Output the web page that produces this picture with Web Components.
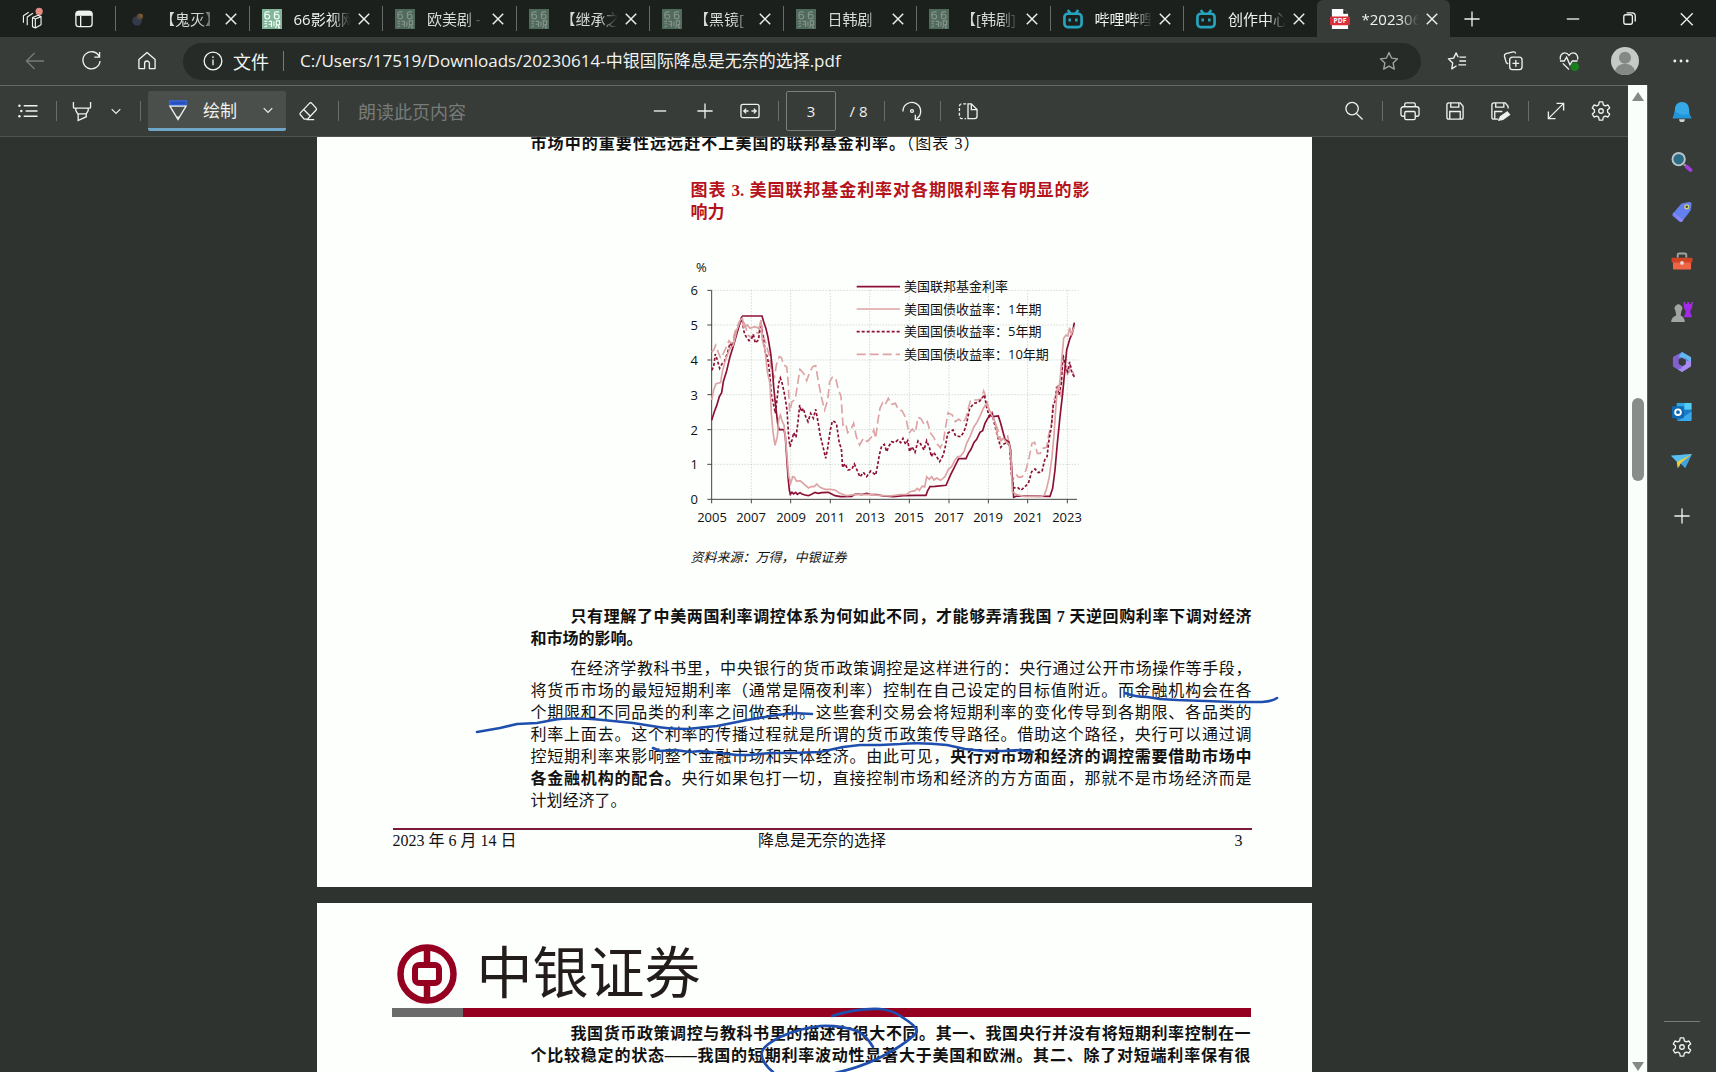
<!DOCTYPE html>
<html lang="zh-CN">
<head>
<meta charset="utf-8">
<title>20230614-中银国际降息是无奈的选择.pdf</title>
<style>
html,body{margin:0;height:100%;background:#2f3330}
body{overflow:hidden;font-family:"Segoe UI","Open Sans","Noto Sans CJK SC",sans-serif}
</style>
</head>
<body>
<browser-app></browser-app>
<script>
const ICONS = {
  workspaces:'<path d="M1.500 14.500V7L7 3.500M5.500 17V8.500L11.500 4.500M11 9l6-2.500 3 1.500v8.500L14 20l-3-1.500zM11 9l3 1.500 6-2.500M14 10.500V20" stroke-width="1.200" stroke-linejoin="round"/><circle cx="18" cy="2.500" r="3.800" fill="#e58a83" stroke="none"/>',
  vtabs:'<rect x="2" y="2.500" width="17" height="16" rx="3"/><path d="M2.500 6.500V5a2.500 2.500 0 0 1 2.500-2.500h11A2.500 2.500 0 0 1 18.500 5v1.500z" fill="currentColor"/><path d="M7 7v11.500"/>',
  close:'<path d="M5 5l11 11M16 5L5 16" stroke-width="1.500"/>',
  plus:'<path d="M10.500 2.500v16M2.500 10.500h16"/>',
  minus:'<path d="M4 10.500h13"/>',
  restore:'<rect x="4" y="6" width="9" height="10" rx="2"/><path d="M7 4h5.500a3.500 3.500 0 0 1 3.500 3.500V13"/>',
  x:'<path d="M4 4.500l12.500 12.500M16.500 4.500L4 17"/>',
  back:'<path d="M20 10.500H1.500M10 2L1.500 10.500 10 19"/>',
  refresh:'<path d="M19 5.500A9 9 0 1 0 20 10.500M19.500 1v5.500H14"/>',
  home:'<path d="M2 9l8.500-7.500L19 9v9.500h-6V13a2.500 2.500 0 0 0-5 0v5.500H2z" stroke-linejoin="round"/>',
  info:'<circle cx="10.500" cy="10.500" r="9.300"/><path d="M10.500 9v6M10.500 5.500v1.800"/>',
  star:'<path d="M10.500 1.500l2.700 5.900 6.300.8-4.700 4.400 1.300 6.400-5.600-3.200L4.900 19l1.300-6.400L1.500 8.200l6.300-.8z" stroke-linejoin="round"/>',
  favorites:'<path d="M10 15.500L5 18.800l1-6.300L1.500 8.200l5.500-.7L9.500 2l2.300 4.500M13 6.500h7M13 10.500h7M12 14.500h8" stroke-linejoin="round"/>',
  collections:'<path d="M5.500 13.500l-2-1L1.500 5.500a2.500 2.500 0 0 1 1.600-2.800l7.500-1.700a2.500 2.500 0 0 1 2.800 1.500"/><rect x="7" y="6.500" width="13" height="13" rx="3"/><path d="M13.500 9.500v7M10 13h7"/>',
  heart:'<path d="M1.500 9C.5 5 3 2 6 2c2 0 3.500 1 4.500 2.500C11.500 3 13 2 15 2c3 0 5.500 3 4.500 7M1 10.500h4.500l2.500-4 3.500 8 2.500-4h5.500M4 13l6.500 6.500"/><circle cx="16.500" cy="16.500" r="4.500" fill="#17801a" stroke="none"/>',
  dots:'<g fill="currentColor" stroke="none"><circle cx="4" cy="10.500" r="1.500"/><circle cx="10.500" cy="10.500" r="1.500"/><circle cx="17" cy="10.500" r="1.500"/></g>',
  avatar:'<circle cx="10.500" cy="10.500" r="10.500" fill="#c6cac6" stroke="none"/><circle cx="10.500" cy="8" r="4.500" fill="#858985" stroke="none"/><path d="M3 17.800a8 8 0 0 1 15 0 10.500 10.500 0 0 1-15 0" fill="#858985" stroke="none"/>',
  list:'<path d="M6 5h14.500M8 10.500h12.500M6 16h14.500"/><g fill="currentColor" stroke="none"><circle cx="1.500" cy="5" r="1.300"/><circle cx="3.500" cy="10.500" r="1.300"/><circle cx="1.500" cy="16" r="1.300"/></g>',
  highlight:'<path d="M1.500 1v5.500a1 1 0 0 0 1 1h16a1 1 0 0 0 1-1V1M4 7.500v2.500l2 3.500h9l2-3.500V7.500M6.500 13.500v7l8.500-4v-3"/>',
  chev:'<path d="M6 8.500l4.500 4.500L15 8.500" stroke-width="1.200"/>',
  pen:'<path d="M1.500 1h18l-.8 4.500H2.300z" fill="#2450c0" stroke="#3a68dc"/><path d="M2 6.500l7 11.500h3L19 6.500zM9 18l1.500 2.500L12 18"/>',
  erase:'<path d="M12 2.500L2.500 12.500a1.500 1.500 0 0 0 0 2l4 4.500h3.500L19 9.500a1.500 1.500 0 0 0 0-2L14.500 2.500a1.500 1.500 0 0 0-2.500 0zM6 9l7 7M9 19.500h8"/>',
  fit:'<rect x="1" y="3.500" width="19" height="14" rx="2"/><path d="M4.500 10.500h4.500M12 10.500h4.500M6.500 8L4 10.500 6.500 13M14.500 8l2.500 2.500-2.500 2.500"/>',
  rotate:'<path d="M1 11a9.300 9.300 0 1 1 14.500 7.500M14 14.500v5h5"/><circle cx="10.500" cy="10.500" r="1.500"/>',
  pages:'<path d="M10.500 3v15.500h7a2.500 2.500 0 0 0 2.500-2.500V9l-6-6zM14 3v6h6"/><path d="M8.500 3H4a2.500 2.500 0 0 0-2.500 2.500V16A2.500 2.500 0 0 0 4 18.500h4.500" stroke-dasharray="3 2"/>',
  search:'<circle cx="8.500" cy="8" r="6.500"/><path d="M13 13l6.500 6.500"/>',
  print:'<path d="M5 6V3.500A1.500 1.500 0 0 1 6.500 2h8A1.500 1.500 0 0 1 16 3.500V6M5 16H3a2 2 0 0 1-2-2V8.500A2.500 2.500 0 0 1 3.500 6h14A2.500 2.500 0 0 1 20 8.500V14a2 2 0 0 1-2 2h-2"/><rect x="5" y="11" width="11" height="8.500" rx="1.500"/>',
  save:'<path d="M4 2h12l3 3.500V17a2 2 0 0 1-2 2H4a2 2 0 0 1-2-2V4a2 2 0 0 1 2-2zM6 2v4.500h8.500V2M5 19v-8h11v8"/>',
  saveas:'<path d="M9 19H4a2 2 0 0 1-2-2V4a2 2 0 0 1 2-2h12l3 3.500V8M6 2v4.500h8.500V2M5 19v-8h8"/><path d="M18 11.500l-7 5-1.500 3.500 4-.8 7-5z" fill="currentColor"/>',
  expand:'<path d="M2.500 18.500l16-16M11 2.500h7.500V10M2.500 11v7.500H10"/>',
  gear:'<path d="M8.700 1h3.600l.7 3 2 1.100 2.800-.9 1.800 3.100-2.200 2v2.400l2.200 2-1.800 3.100-2.800-.9-2 1.100-.7 3H8.700l-.7-3-2-1.100-2.800.9-1.800-3.100 2.200-2V9.300l-2.200-2 1.800-3.100 2.800.9L8 4z" stroke-linejoin="round"/><circle cx="10.500" cy="10.500" r="2.400"/>',
  fire:'<circle cx="9.500" cy="12.500" r="5" fill="#4a547c" stroke="none"/><circle cx="12.500" cy="8" r="3.400" fill="#9a6f4c" stroke="none"/><circle cx="13.500" cy="7" r="1.700" fill="#e69a3c" stroke="none"/>',
  film:'<rect x="0" y="0" width="21" height="21" fill="#83b59b" stroke="none"/><path d="M8 3H5a2 2 0 0 0-2 2v3a2 2 0 0 0 5 0 2 2 0 0 0-5 0M18 3h-3a2 2 0 0 0-2 2v3a2 2 0 0 0 5 0 2 2 0 0 0-5 0M2.500 13h3M2.500 15.500h3M2.500 19l3-1.500M7 13h3v6M7 16h3M12.500 13v5M15 12.500h3.500v4H15zM16 17l-2 2.500M17.500 17v2.500H19" stroke="#f2fff7" stroke-width="1.200"/>',
  bili:'<rect x="1.500" y="5" width="18" height="14" rx="3.500" stroke="#27a4bd" stroke-width="2.800"/><path d="M5 1l3 4M16 1l-3 4M7 10v3M14 10v3" stroke="#27a4bd" stroke-width="2.600"/>',
  pdf:'<path d="M2 0h12l5 5v16H2z" fill="#fff" stroke="none"/><path d="M14 0l5 5h-5z" fill="#222" stroke="none"/><rect y="8" width="21" height="9" rx="1" fill="#d9303c" stroke="none"/><text x="10.500" y="15" font-size="7" font-weight="700" fill="#fff" stroke="none" text-anchor="middle">PDF</text>',
  bell:'<path d="M10.500 0C5 0 3 4 3 9c0 4-1 5-2.500 8h20C19 14 18 13 18 9c0-5-2-9-7.500-9" fill="#35a8e8" stroke="none"/><path d="M7.500 18h6a3 3 0 0 1-6 0" fill="#cfd6d8" stroke="none"/><path d="M3 9c2 4 10 6 15 3l2 5H1z" fill="#2294d8" stroke="none"/>',
  lens:'<path d="M12.500 13l4 3" stroke="#9aa4a8" stroke-width="2"/><circle cx="7" cy="7.500" r="6.500" fill="#2c6c84" stroke="#b8c4c8" stroke-width="2"/><path d="M15.500 15.500l4 3.500" stroke="#a23be0" stroke-width="4" stroke-linecap="round"/>',
  tag:'<path d="M1 12L10 1.500 18 0q3 0 2.500 3l-1 6L11 20q-2 2-4 0l-6-5q-1.500-1.500 0-3" fill="#6480f0" stroke="none"/><path d="M1 12l8 9q2 0 3-2L1 11" fill="#9585f2" stroke="none"/><circle cx="15.500" cy="5" r="2" fill="#44463a" stroke="#d8d070"/>',
  tools:'<path d="M6 6V3q0-1.500 1.500-1.500h6q1.500 0 1.500 1.500V6" stroke="#a0a4a0" stroke-width="2"/><rect x="1" y="9" width="19" height="9.500" rx="1" fill="#ee6444" stroke="none"/><rect x="-.5" y="6" width="22" height="5" rx="1" fill="#d04424" stroke="none"/><circle cx="10.500" cy="11.500" r="2" fill="#ddd" stroke="none"/>',
  chess:'<path d="M12 0h2v2h2V0h2v2h2V0h2l-1 6-2 4 2 6h-8.500l2-6-2-4z" fill="#a12be6" stroke="none"/><path d="M3.500 9a4 4 0 1 1 6.500 0l-1 5q4 2 4.500 7H-1Q-.5 16 4.500 14z" fill="#a2a5a2" stroke="none"/>',
  m365:'<path d="M10.500 0l9.500 5.500v9.500l-9.500 6-9.500-6v-9.500z" fill="#6a74dc" stroke="none"/><path d="M10.500 0l9.500 5.500V11l-6-4.500L7 5z" fill="#60b8ec" stroke="none"/><path d="M20 10v5l-9.500 6L6 18l8-4.500V9z" fill="#a98af0" stroke="none"/><path d="M1 5.500l6-3.500v11l4 4-5 1-5-3z" fill="#8560cc" stroke="none"/><path d="M7 8l3-2 4.500 2.500v4L11 15l-4-2.500z" fill="#383c38" stroke="none"/>',
  outlook:'<rect x="5" y="1" width="15.500" height="19" rx="1" fill="#1a7cc8" stroke="none"/><rect x="5" y="1" width="8" height="7" fill="#2fa5e6" stroke="none"/><rect x="13" y="1" width="7.500" height="7" fill="#52ccf4" stroke="none"/><path d="M20.500 10v9q0 1-1 1H6z" fill="#38a9ec" stroke="none"/><rect x="0" y="4.500" width="12.500" height="12.500" rx="1" fill="#0e68b4" stroke="none"/><circle cx="6.300" cy="10.700" r="3" stroke="#fff" stroke-width="2"/>',
  plane:'<path d="M-1 4l22-2-7 15-5-5-2 5-1-6z" fill="#3ea2e4" stroke="none"/><path d="M-1 4l7 7L21 2z" fill="#57bff0" stroke="none"/><path d="M6 10L21 2 9 12l-3 5-1-6z" fill="#e6cf3e" stroke="none"/>'
};
const define = (name, css, html) => customElements.define(name, class extends HTMLElement {
  connectedCallback(){
    if(this.shadowRoot) return;
    const t = document.createElement('template');
    t.innerHTML = '<style>*{box-sizing:border-box}'+css+'</style>'+(typeof html==='function'?html(this):html);
    this.attachShadow({mode:'open'}).append(t.content.cloneNode(true));
  }
});

define('ui-icon', ':host{display:inline-flex;width:20px;height:20px;flex:none}svg{width:100%;height:100%;overflow:visible}',
  e=>`<svg viewBox="0 0 21 21" fill="none" stroke="currentColor" stroke-width="1.400" aria-hidden="true">${ICONS[e.getAttribute('name')]}</svg>`);

define('tool-button', `:host{display:flex;width:40px;flex:none;color:#eef2ee}
button{flex:1;display:flex;align-items:center;justify-content:center;padding:0;border:0;background:none;color:inherit;height:38px;font:inherit}`,
  e=>`<button aria-label="${e.getAttribute('label')}"><ui-icon name="${e.getAttribute('icon')}" part="icon"></ui-icon></button>`);

define('tool-sep', ':host{display:flex;justify-content:center;width:16px;flex:none}i{width:1px;height:20px;background:#6a6e6a}', '<i></i>');

define('browser-tab', `:host{display:flex;flex:1 1 0;min-width:0;height:37px;align-items:center;color:#eef2ee}
:host::before{content:"";width:1px;height:25px;background:#686c68;flex:none}
:host([dim]) .icon{opacity:.5}
:host([dim]){color:#d6dad6}
:host([active]){background:#383c38;border-radius:6px 6px 0 0}
:host([active])::before{background:none}
.tab{flex:1;min-width:0;display:flex;align-items:center;gap:12px;padding:0 0 0 12px;border:0;background:none;color:inherit;font:15px/20px "Segoe UI","Open Sans","Noto Sans CJK SC",sans-serif;height:34px}
.title{flex:1;min-width:0;overflow:hidden;white-space:nowrap;text-align:left;-webkit-mask-image:linear-gradient(90deg,#000 65%,transparent 98%);mask-image:linear-gradient(90deg,#000 65%,transparent 98%)}
.close{width:24px;height:34px;margin-right:6px;padding:0;border:0;background:none;color:#eef2ee;display:flex;align-items:center;justify-content:center}`,
  e=>`<button class="tab" role="tab"><ui-icon class="icon" name="${e.getAttribute('icon')}"></ui-icon><span class="title"><slot></slot></span></button><button class="close" aria-label="关闭"><ui-icon name="close"></ui-icon></button>`);

define('tab-strip', `:host{display:flex;background:#1b201c;height:37px;align-items:center}
.lead{display:flex;width:115px;padding-left:12px;gap:12px}
.tabs{flex:1;display:flex;min-width:0}
.end{display:flex;width:266px;align-items:center;justify-content:space-between;padding:0 9px 0 2px}
.win{display:flex;gap:17px}`,
`<div class="lead"><tool-button icon="workspaces" label="工作区"></tool-button><tool-button icon="vtabs" label="标签页操作"></tool-button></div>
<div class="tabs" role="tablist">
<browser-tab icon="fire" dim>【鬼灭】</browser-tab>
<browser-tab icon="film">66影视网</browser-tab>
<browser-tab icon="film" dim>欧美剧 -</browser-tab>
<browser-tab icon="film" dim>【继承之</browser-tab>
<browser-tab icon="film" dim>【黑镜[</browser-tab>
<browser-tab icon="film" dim>日韩剧</browser-tab>
<browser-tab icon="film" dim>【[韩剧]</browser-tab>
<browser-tab icon="bili">哔哩哔哩</browser-tab>
<browser-tab icon="bili">创作中心</browser-tab>
<browser-tab icon="pdf" active>*20230614</browser-tab>
</div>
<div class="end"><tool-button icon="plus" label="新建标签页"></tool-button><div class="win"><tool-button icon="minus" label="最小化"></tool-button><tool-button icon="restore" label="还原"></tool-button><tool-button icon="x" label="关闭窗口"></tool-button></div></div>`);

define('address-bar', `:host{display:flex;align-items:center;gap:16px;height:48px;padding:0 15px;background:#383c38}
.pill{flex:1;min-width:0;display:flex;align-items:center;height:37px;border-radius:19px;background:#272b28;padding:0 12px 0 20px;color:#f0f4f0;font:17px/24px "Segoe UI","Noto Sans CJK SC",sans-serif}
label{margin-left:10px;font-size:18px}
.bar{width:1px;height:20px;background:#777b77;margin:0 16px 0 14px}
input{flex:1;min-width:0;border:0;padding:0;background:none;color:inherit;font:17px/24px "Segoe UI","Open Sans","Noto Sans CJK SC",sans-serif;outline:0}
.off{color:#777b77}.star{color:#a0a4a0}
.me::part(icon){width:28px;height:28px}`,
`<tool-button class="off" icon="back" label="返回"></tool-button><tool-button icon="refresh" label="刷新"></tool-button><tool-button icon="home" label="主页"></tool-button>
<div class="pill"><ui-icon name="info"></ui-icon><label for="url">文件</label><span class="bar"></span><input id="url" type="text" value="C:/Users/17519/Downloads/20230614-中银国际降息是无奈的选择.pdf"><tool-button class="star" icon="star" label="收藏此页"></tool-button></div>
<tool-button icon="favorites" label="收藏夹"></tool-button><tool-button icon="collections" label="集锦"></tool-button><tool-button icon="heart" label="浏览器概要"></tool-button><tool-button class="me" icon="avatar" label="个人资料"></tool-button><tool-button icon="dots" label="更多"></tool-button>`);

define('pdf-toolbar', `:host{display:grid;grid-template-columns:1fr auto 1fr;align-items:center;height:52px;background:#383c38;border-top:1px solid #646864;border-bottom:1px solid #50544f;color:#eef2ee;font:17px/24px "Noto Sans CJK SC",sans-serif}
div{display:flex;align-items:center}
.l{padding-left:8px}.r{justify-content:flex-end;padding-right:7px}
.hl{width:36px}.ch{width:32px}.er{width:44px}
.draw{height:40px;background:#4b4f4c;border-bottom:3px solid #6fa5c6;border-radius:2px}
.draw button{display:flex;align-items:center;gap:15px;width:102px;padding:0 0 0 20px;height:37px;border:0;background:none;color:inherit;font:inherit;white-space:nowrap}
.draw tool-button{width:36px}
.read{border:0;background:none;padding:0;margin-left:12px;color:#777b78;font:18px/24px "Noto Sans CJK SC",sans-serif;white-space:nowrap}
.gap{gap:5px}
input{width:50px;height:40px;border:1px solid #7b7f7b;background:none;color:inherit;text-align:center;font:15px/20px "Open Sans",sans-serif;border-radius:2px;padding:0}
label{width:40px;padding-left:5px;text-align:center;font:15px/20px "Open Sans",sans-serif}`,
`<div class="l"><tool-button icon="list" label="目录"></tool-button><tool-sep></tool-sep><tool-button class="hl" icon="highlight" label="突出显示"></tool-button><tool-button class="ch" icon="chev" label="突出显示选项"></tool-button><tool-sep></tool-sep>
<div class="draw"><button><ui-icon name="pen"></ui-icon>绘制</button><tool-button icon="chev" label="绘制选项"></tool-button></div><tool-button class="er" icon="erase" label="擦除"></tool-button><tool-sep></tool-sep><button class="read" disabled>朗读此页内容</button></div>
<div><div class="gap"><tool-button icon="minus" label="缩小"></tool-button><tool-button icon="plus" label="放大"></tool-button><tool-button icon="fit" label="适应宽度"></tool-button></div><tool-sep></tool-sep><input id="pg" type="text" value="3"><label for="pg">/ 8</label><tool-sep></tool-sep><tool-button icon="rotate" label="旋转"></tool-button><tool-sep></tool-sep><tool-button icon="pages" label="页面视图"></tool-button></div>
<div class="r"><tool-button icon="search" label="查找"></tool-button><tool-sep></tool-sep><div class="gap"><tool-button icon="print" label="打印"></tool-button><tool-button icon="save" label="保存"></tool-button><tool-button icon="saveas" label="另存为"></tool-button></div><tool-sep></tool-sep><div class="gap"><tool-button icon="expand" label="全屏"></tool-button><tool-button icon="gear" label="设置"></tool-button></div></div>`);

define('scroll-bar', `:host{display:flex;flex-direction:column;align-items:center;width:20px;flex:none;background:#fafefa;padding:7px 0 1px;border-right:1px solid #5a5e5a}
i{border:6px solid transparent;border-top:0;border-bottom:9px solid #858985}
i:last-child{border-bottom:0;border-top:9px solid #858985}
b{width:12px;height:83px;border-radius:6px;background:#898d89}
.a{flex:297}.b{flex:580}`, '<i></i><span class="a"></span><b></b><span class="b"></span><i></i>');

define('side-bar', `:host{display:flex;flex-direction:column;align-items:center;width:68px;flex:none;background:#383c38;padding:2px 0 0;color:#eef2ee}
tool-button{height:50px;align-items:center}
.add{margin-top:4px}.end{margin-top:auto;display:flex;flex-direction:column;align-items:center;border-top:1px solid #777b77;width:36px}`,
()=>[['bell','通知'],['lens','搜索'],['tag','购物'],['tools','工具'],['chess','游戏'],['m365','Microsoft 365'],['outlook','Outlook'],['plane','Drop']].map(a=>`<tool-button icon="${a[0]}" label="${a[1]}"></tool-button>`).join('')+
'<tool-button class="add" icon="plus" label="自定义"></tool-button><div class="end"><tool-button icon="gear" label="设置"></tool-button></div>');

const SERIES = {
  fed:'M125 541L133 515 140 497 148 470 155 458 160 425 170 392 180 350 190 318 198 290 206 262 214 233 218 228H276L281 245 288 266 294 292 302 340 307 385 311 440 315 480 319 515 323 550 327 569H342L346 590 350 650 354 710 358 750 361 763 366 757 371 762 377 757 382 763 390 758 396 762 405 765 415 767 425 763 435 757 445 760 455 758 475 757 485 762 495 767 512 770 545 769 555 763 565 762 575 764 590 760 600 763 620 764 640 768 670 770 700 767 740 766 768 766 773 752 780 740 795 739 828 736 835 720 842 704 850 688 860 668 866 656H888L895 640 903 628 912 607 920 598 930 577 938 572 945 550 953 535 960 525 968 530 985 528 992 550 1000 580 1005 598 1017 606 1022 630 1026 700 1031 772 1040 768 1140 769 1148 745 1155 690 1162 610 1170 530 1178 460 1185 385 1190 330 1200 295 1207 280 1213 248',
  one:'M125 480L131 450 138 431 152 428 156 400 164 368 172 345 180 325 190 315 200 272 210 242 217 234 222 262 232 255 240 265 255 260 267 265 273 240 277 300 285 330 292 395 300 430 304 520 309 575 315 616 322 590 326 538 331 525 337 545 342 555 347 600 352 660 356 708 362 730 368 710 373 711 380 724 390 722 405 735 416 744 425 739 433 740 440 732 450 742 465 748 480 748 495 750 510 760 530 767 560 763 600 764 630 766 660 768 690 764 710 763 720 755 735 752 742 745 748 751 757 738 764 741 770 710 778 718 785 710 792 720 800 714 812 721 825 710 835 688 845 680 855 660 863 650 872 648 882 635 890 610 900 590 912 560 922 545 932 524 940 505 948 492 956 505 965 525 975 545 983 590 992 600 1000 595 1008 605 1018 613 1023 650 1027 755 1040 764 1060 769 1110 770 1123 766 1130 745 1138 710 1146 650 1152 585 1157 510 1162 445 1167 450 1172 400 1177 340 1181 295 1188 285 1194 288 1199 263 1204 282 1213 262',
  five:'M125 391L131 380 136 342 142 360 149 385 157 370 163 365 172 340 180 310 188 320 195 290 205 262 216 236 222 275 228 290 237 302 244 298 250 283 256 309 265 300 273 252 279 290 286 335 293 355 299 400 304 465 310 490 316 520 322 470 326 430 331 414 337 432 344 465 351 510 356 590 360 620 366 600 371 578 378 592 384 545 389 495 394 515 400 505 407 530 414 545 422 520 430 535 437 508 444 545 451 588 459 620 467 655 473 625 480 575 487 543 494 545 500 555 508 610 514 625 518 683 525 671 534 690 545 688 553 672 561 690 570 711 580 697 590 710 602 693 617 705 623 675 628 645 635 618 643 613 650 635 657 618 665 605 675 608 684 600 692 608 699 595 707 613 713 602 719 635 726 620 735 637 744 603 752 612 762 630 770 602 779 625 784 650 791 637 800 650 809 665 820 645 827 615 833 580 840 575 849 570 857 588 872 590 882 575 890 550 899 505 912 490 925 487 935 477 943 464 950 502 958 530 966 520 975 558 983 590 992 622 1000 613 1012 607 1019 620 1024 700 1031 744 1042 742 1053 751 1065 740 1075 730 1085 695 1095 687 1105 698 1116 695 1124 660 1131 650 1137 600 1144 560 1150 495 1157 480 1160 440 1167 464 1174 430 1179 345 1187 380 1193 395 1199 366 1206 400 1213 410',
  ten:'M125 337L132 328 137 316 144 335 152 355 160 340 167 325 177 302 186 312 195 275 208 245 218 236 225 255 234 285 244 293 254 275 265 280 273 248 281 290 290 320 299 350 304 390 313 415 319 375 328 350 334 352 341 375 350 380 354 420 359 515 366 485 376 478 383 430 390 388 401 400 410 422 418 400 428 380 437 377 446 430 455 475 464 510 473 480 479 425 487 412 497 415 503 440 513 470 519 555 527 550 533 578 543 568 551 550 559 590 569 615 580 595 592 605 604 592 611 570 617 595 624 540 630 505 638 488 645 495 655 475 665 493 676 490 686 510 696 512 708 535 717 580 727 567 736 578 744 532 753 536 763 555 772 545 782 580 790 590 800 610 811 623 820 605 827 560 834 518 847 525 856 545 866 537 878 548 888 534 895 505 902 480 920 480 934 477 941 453 949 475 957 510 965 511 974 545 984 570 993 603 1002 593 1013 588 1020 630 1027 720 1038 703 1046 712 1057 710 1068 690 1078 650 1086 610 1094 607 1102 640 1111 640 1119 625 1130 622 1136 585 1145 550 1150 485 1158 465 1164 435 1172 470 1178 350 1186 380 1194 408 1201 378 1207 390 1213 412'
};
define('rate-chart', `:host{display:block}svg{display:block;overflow:visible;width:410px;height:270px;font:13px "Open Sans","Noto Sans CJK SC",sans-serif;fill:#111}
.grid{stroke:#c4c6c4;stroke-width:3;stroke-dasharray:3 6}.ax{stroke:#444;stroke-width:3}
.d{stroke:#8d0f34;stroke-width:5}.p{stroke:#dda3a5;stroke-width:5}.five{stroke-dasharray:9 6}.ten{stroke-dasharray:27 12}`,
()=>{
  const ys=[778,673,569,464,360,255,151], xs=[125,244,362,481,599,718,837,955,1073,1192];
  let g='',a='M125 151V778H1221',t='';
  ys.forEach((y,i)=>{ if(i) g+=`M125 ${y}H1225`; a+=`M112 ${y}H125`; t+=`<text x="28" y="${Math.round(y/3)+5}" text-anchor="end">${i}</text>`; });
  xs.forEach((x,i)=>{ if(i) g+=`M${x} 151V778`; a+=`M${x} 778v12`; t+=`<text x="${Math.round(x/3)}" y="282" text-anchor="middle">${2005+2*i}</text>`; });
  ['美国联邦基金利率','美国国债收益率：1年期','美国国债收益率：5年期','美国国债收益率：10年期'].forEach((s,i)=>t+=`<text x="234" y="${51+Math.round(i*22.500)}">${s}</text>`);
  return `<svg viewBox="20 20 410 270" role="img" aria-label="美国联邦基金利率与国债收益率"><g transform="scale(.33333)" fill="none"><path class="grid" d="${g}"/><path class="ax" d="${a}"/>
<path class="p ten" d="${SERIES.ten}"/><path class="d five" d="${SERIES.five}"/><path class="d" d="${SERIES.fed}"/><path class="p" d="${SERIES.one}"/>
<path class="d" d="M560 140H690"/><path class="p" d="M560 207H690"/><path class="d five" d="M560 275H690"/><path class="p ten" d="M560 343H690"/></g><text x="26" y="32">%</text>${t}</svg>`;
});

define('ink-layer', `:host{position:absolute;inset:0;pointer-events:none}svg{width:100%;height:100%;fill:none;stroke:#1f4fae;stroke-width:2.600;stroke-linecap:round;stroke-linejoin:round;display:block;overflow:hidden}`,
  e=>`<svg aria-hidden="true"><g transform="translate(-317 ${e.getAttribute('dy')})"><path d="${e.getAttribute('d')}"/></g></svg>`);

define('text-line', `:host{display:block;white-space:nowrap;text-align:left}
:host([full]){text-align:justify;text-align-last:justify}
:host([indent]){padding-left:40px}`, '<slot></slot>');

define('pdf-page', `:host{display:block;position:relative;width:995px;flex:none;background:#fdfffd;color:#111;font:16px/22px "Liberation Serif","KaiTi","Noto Sans CJK SC",serif}`, '<slot></slot>');

define('page-three', `:host{display:block;padding:16px 60px 35px 76px}
.text{padding-left:138px}
.top{padding-right:272px}
h3{margin:25px 162px 0 160px;font-size:17px;line-height:22px;color:#b5121b}
rate-chart{margin:36px 0 0 159px}
.src{margin:18px 0 0 160px;font-size:13px;line-height:20px;font-style:italic}
.lead{margin-top:38px;font-weight:700}.body{margin-top:8px}
footer{display:grid;grid-template-columns:1fr auto 1fr;margin-top:16px;border-top:2px solid #7d1a3a;line-height:22px}
footer span:last-child{text-align:right;padding-right:9px}`,
`<div class="text"><text-line full class="top"><b>市场中的重要性远远赶不上美国的联邦基金利率。</b>（图表 3）</text-line>
<h3><text-line full>图表 3. 美国联邦基金利率对各期限利率有明显的影</text-line><text-line>响力</text-line></h3>
<rate-chart></rate-chart><div class="src">资料来源：万得，中银证券</div>
<div class="lead"><text-line full indent>只有理解了中美两国利率调控体系为何如此不同，才能够弄清我国 7 天逆回购利率下调对经济</text-line><text-line>和市场的影响。</text-line></div>
<div class="body"><text-line full indent>在经济学教科书里，中央银行的货币政策调控是这样进行的：央行通过公开市场操作等手段，</text-line>
<text-line full>将货币市场的最短短期利率（通常是隔夜利率）控制在自己设定的目标值附近。而金融机构会在各</text-line>
<text-line full>个期限和不同品类的利率之间做套利。这些套利交易会将短期利率的变化传导到各期限、各品类的</text-line>
<text-line full>利率上面去。这个利率的传播过程就是所谓的货币政策传导路径。借助这个路径，央行可以通过调</text-line>
<text-line full>控短期利率来影响整个金融市场和实体经济。由此可见，<b>央行对市场和经济的调控需要借助市场中</b></text-line>
<text-line full><b>各金融机构的配合。</b>央行如果包打一切，直接控制市场和经济的方方面面，那就不是市场经济而是</text-line>
<text-line>计划经济了。</text-line></div></div>
<footer><span>2023 年 6 月 14 日</span><span>降息是无奈的选择</span><span>3</span></footer>
<ink-layer dy="-117" d="M1125 693Q1135 697 1147 697L1160 699 1177 700 1233 702 1262 702Q1273 701 1277 698M477 732L500 728 517 724 537 723 553 720Q570 717 603 720L633 723 652 726Q667 729 687 729L717 726 747 720 777 715 793 713 812 714M653 748L660 751 675 750 690 752 700 751 720 753 737 755 750 755 770 753 793 753 820 752 843 747 860 745 880 745 900 744Q920 742 947 745L965 749 983 751 1003 751 1020 750 1033 752"></ink-layer>`);

define('page-four', `:host{display:block;padding:41px 61px 0 75px;height:400px}
header{display:flex;align-items:center;height:60px;gap:20px;padding-left:5px;color:#221d1b;font-size:56px;line-height:60px}
header svg{width:60px;height:60px}
.bar{display:flex;height:9px;margin-top:4px;background:#950020}.bar::before{content:"";width:71px;background:#6a6b6a}
.text{padding:6px 0 0 139px;font-weight:700}`,
`<header><svg viewBox="0 0 60 60" fill="none" stroke="#950020" aria-hidden="true"><circle cx="30" cy="30" r="26.500" stroke-width="6.500"/><rect x="18" y="21" width="24" height="18" rx="4" stroke-width="6"/><path d="M30 3v16M30 41v16" stroke-width="6.500"/></svg><span>中银证券</span></header><div class="bar"></div>
<div class="text"><text-line full indent>我国货币政策调控与教科书里的描述有很大不同。其一、我国央行并没有将短期利率控制在一</text-line><text-line full>个比较稳定的状态——我国的短期利率波动性显著大于美国和欧洲。其二、除了对短端利率保有很</text-line></div>
<ink-layer dy="-904" d="M832 1017Q857 1009 880 1010Q893 1011 905 1020Q920 1030 916 1034Q905 1046 877 1060Q858 1069 835 1074M873 1048Q866 1036 857 1032Q840 1026 820 1027Q797 1030 780 1038Q763 1047 762 1053Q760 1062 773 1073"></ink-layer>`);

define('pdf-viewer', `:host{display:flex;flex-direction:column;align-items:center;gap:16px;overflow:hidden;min-height:0;background:#2f3330}
pdf-page:first-of-type{margin-top:-20px}`,
`<pdf-page><page-three></page-three></pdf-page><pdf-page><page-four></page-four></pdf-page>`);

define('browser-app', `:host{display:flex;flex-direction:column;height:100vh;overflow:hidden}
.row{flex:1;display:flex;min-height:0}.doc{flex:1;min-width:0;display:flex;flex-direction:column}pdf-viewer{flex:1}`,
`<tab-strip></tab-strip><address-bar></address-bar><div class="row"><div class="doc"><pdf-toolbar></pdf-toolbar><pdf-viewer></pdf-viewer></div><scroll-bar></scroll-bar><side-bar></side-bar></div>`);
</script>
</body>
</html>
